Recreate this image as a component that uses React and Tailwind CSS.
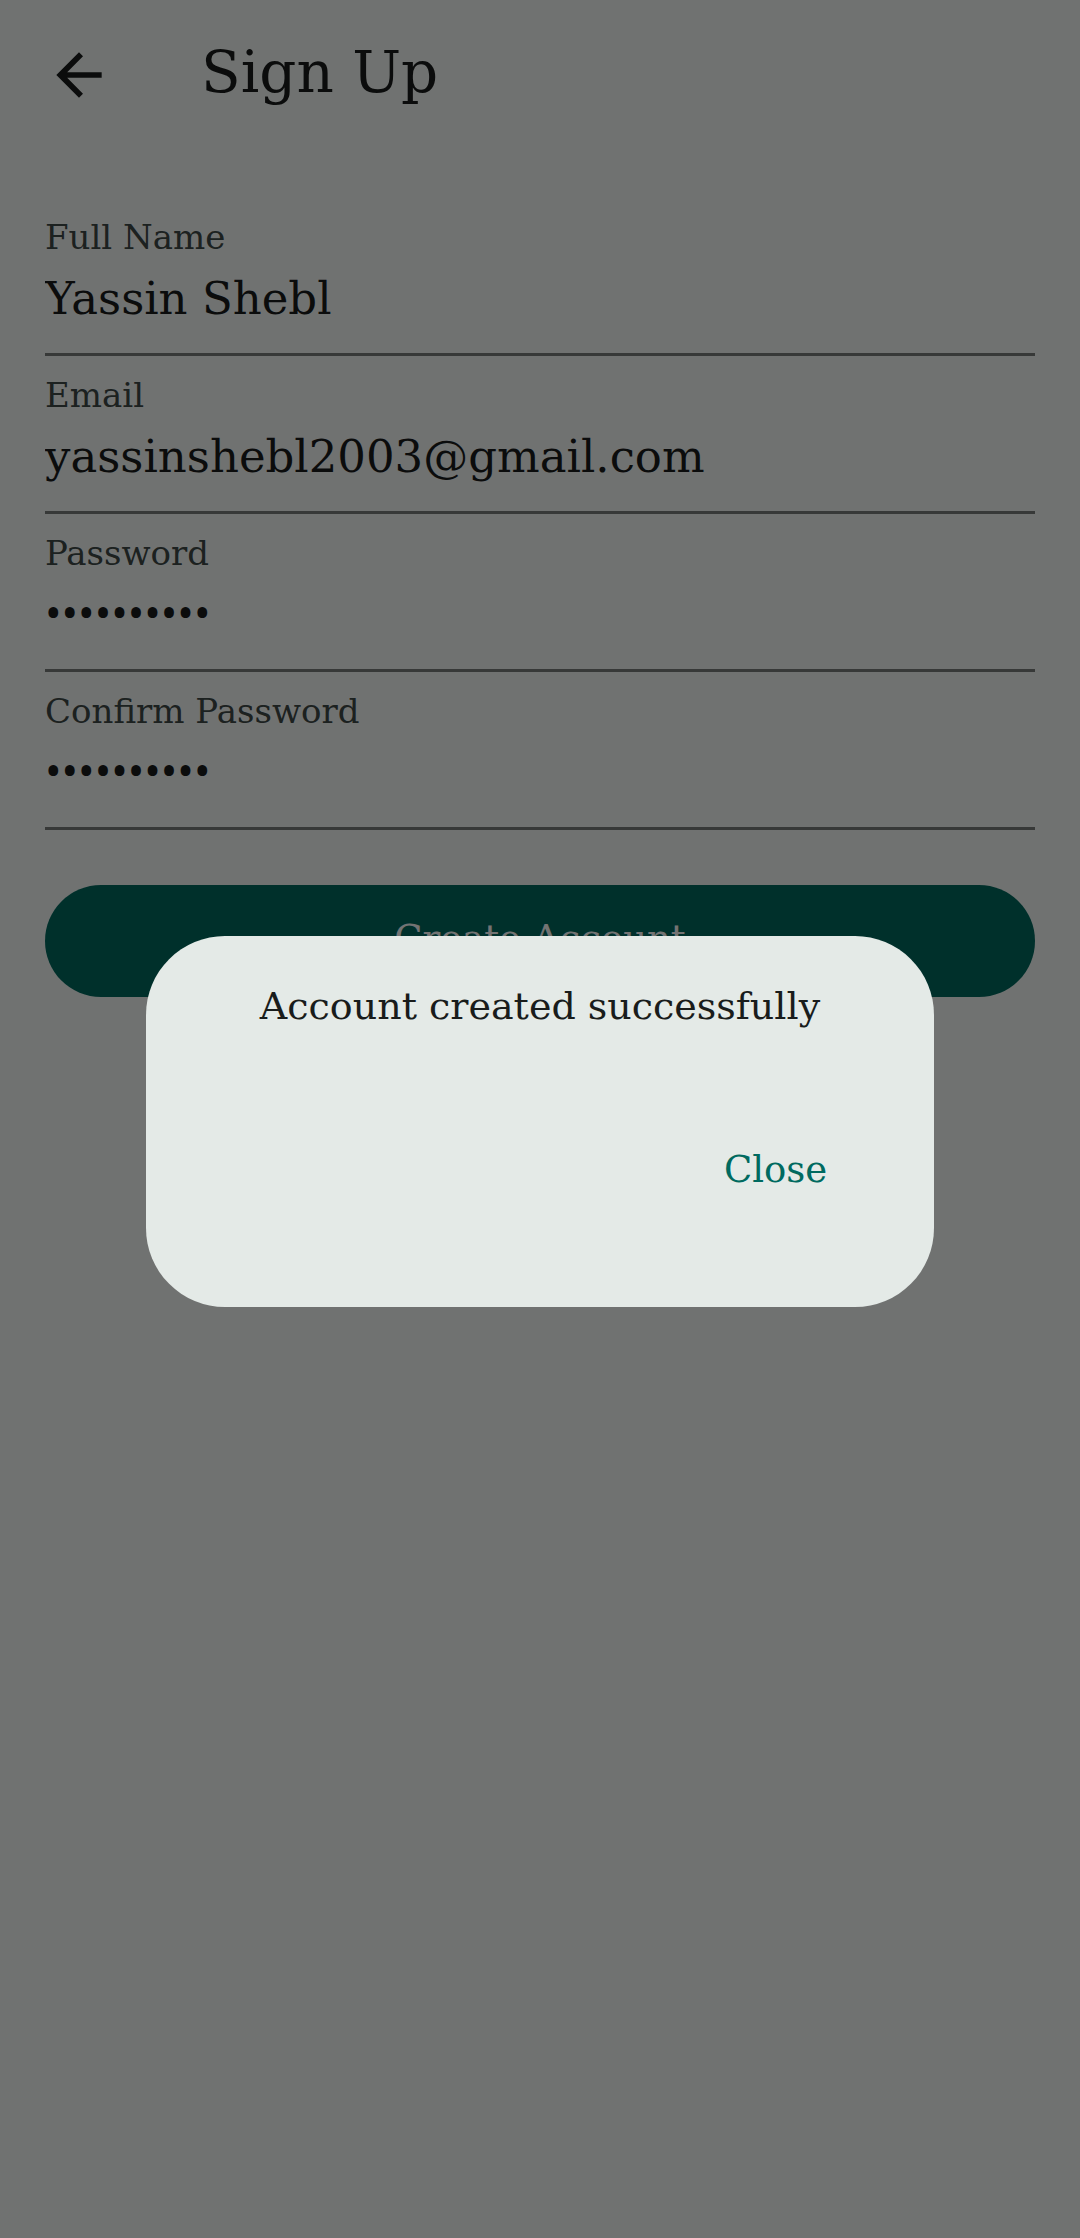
import React, { useState } from "react";
import { MdArrowBack } from "react-icons/md";

const FIELDS = [
  { id: "name", label: "Full Name", type: "text", value: "Yassin Shebl" },
  { id: "email", label: "Email", type: "email", value: "yassinshebl2003@gmail.com" },
  { id: "password", label: "Password", type: "password", value: "abcdefghij" },
  { id: "confirm", label: "Confirm Password", type: "password", value: "abcdefghij" },
];

function Field({ id, label, type, value }) {
  const font = type === "password" ? "font-['Noto_Sans',sans-serif] text-[44px] pb-1" : "text-[45px]";
  return (
    <div className="flex h-[158px] flex-col border-b-3 border-[#7a7f7d] pt-[14px]">
      <label htmlFor={id} className="text-[34px] leading-[50px] text-[#3f4947]">
        {label}
      </label>
      <input
        id={id}
        type={type}
        defaultValue={value}
        className={`h-[72px] w-full bg-transparent text-[#191c1b] outline-none ${font}`}
      />
    </div>
  );
}

export default function App() {
  const [open, setOpen] = useState(true);
  return (
    <div className="min-h-screen bg-[#f9fdfb] font-['Roboto_Slab','DejaVu_Serif',serif] text-[#191c1b]">
      <header className="flex h-[150px] items-center gap-[88px] px-[45px]">
        <button type="button" aria-label="Back">
          <MdArrowBack className="size-[68px]" />
        </button>
        <h1 className="pb-1.5 text-[58px] leading-[76px]">Sign Up</h1>
      </header>

      <form className="flex flex-col px-[45px] pt-12" onSubmit={(e) => e.preventDefault()}>
        {FIELDS.map((field) => (
          <Field key={field.id} {...field} />
        ))}
        <button
          type="submit"
          className="mt-[55px] h-[112px] rounded-full bg-[#006a60] pb-1 text-[37px] text-white"
        >
          Create Account
        </button>
      </form>

      {open && (
        <div className="fixed inset-0 flex items-center justify-center bg-black/55 pt-1">
          <div
            role="dialog"
            aria-modal="true"
            aria-labelledby="dialog-title"
            className="flex w-[73%] flex-col rounded-[79px] bg-[#e4eae7] px-[107px] pt-[45px] pb-[112px]"
          >
            <h2 id="dialog-title" className="text-center text-[38px] leading-[50px] whitespace-nowrap">
              Account created successfully
            </h2>
            <button
              type="button"
              onClick={() => setOpen(false)}
              className="mt-[114px] self-end text-[37px] leading-[50px] text-[#006a60]"
            >
              Close
            </button>
          </div>
        </div>
      )}
    </div>
  );
}
